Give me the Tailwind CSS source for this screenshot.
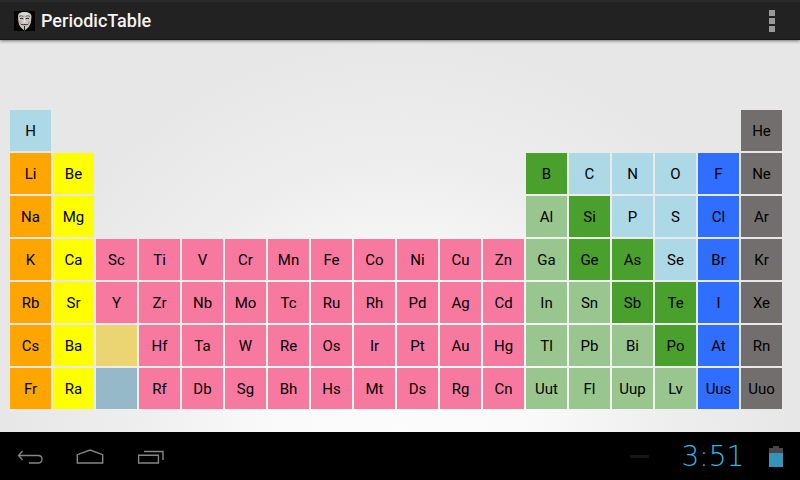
<!DOCTYPE html>
<html lang="en">
<head>
<meta charset="utf-8">
<meta name="viewport" content="width=device-width, initial-scale=1">
<title>PeriodicTable</title>
<script src="https://cdn.jsdelivr.net/npm/@tailwindcss/browser@4"></script>
</head>
<body class="flex min-h-screen flex-col bg-black font-[Roboto,sans-serif]">
<header class="z-10 flex h-10 items-center justify-between border-t-2 border-b border-t-[#2b2b2b] border-b-[#191919] bg-[#222222] pr-4 pl-[14px] shadow-[0_1px_3px_rgba(0,0,0,0.5)]">
  <div class="flex items-center gap-[6px]">
    <svg class="h-5 w-[21px]" viewBox="0 0 21 20" aria-hidden="true">
      <rect width="21" height="20" fill="#050505"/>
      <path d="M4 5Q4 1 10.500 1Q17 1 17.500 5L17 11Q16 16 10.500 19.500Q5 16 4.500 11Z" fill="#c6c6c2"/>
      <path d="M6 2.500Q10.500 0 15 2.500L14 4Q10.500 3 7 4Z" fill="#dededa"/>
      <path d="M5 5.500Q7 3.800 9.500 5.600M11.500 5.600Q14 3.800 16 5.500" fill="none" stroke="#555" stroke-width=".8"/>
      <path d="M6 7.700Q8 6.700 9.500 8M11.500 8Q13 6.700 15 7.700" fill="none" stroke="#222" stroke-width="1"/>
      <path d="M10 7L9.300 11.500H11.700L11 7" fill="#e4e4e0"/>
      <path d="M4.500 10H7.500V12H5ZM14 10H17L16.500 12H14Z" fill="#d0a0a6"/>
      <path d="M5.500 12Q8 14 10.500 12.900Q13 14 15.500 12Q14 14.600 10.500 14.100Q7 14.600 5.500 12Z" fill="#292929"/>
      <path d="M10 15H11V19H10Z" fill="#222"/>
    </svg>
    <h1 class="text-[18px] leading-6 font-medium text-[#f3f3f3]">PeriodicTable</h1>
  </div>
  <button type="button" aria-label="More options" class="flex h-8 w-6 flex-col items-center justify-center gap-[2px]">
    <span class="size-[6px] bg-[#999999]"></span>
    <span class="size-[6px] bg-[#999999]"></span>
    <span class="size-[6px] bg-[#999999]"></span>
  </button>
</header>

<main class="flex-1 bg-[radial-gradient(circle_at_50%_100%,#fcfcfc_0,#f9f9f9_140px,#ededed_280px,#e7e7e7_400px)] pt-[68px] pr-4 pb-5 pl-2">
  <table class="w-full table-fixed border-separate border-spacing-[2px] text-center text-[15px] leading-5 text-black" aria-label="Periodic table of the elements">
    <tbody id="elements"></tbody>
  </table>
</main>

<nav class="flex h-12 items-center justify-between bg-black pr-[17px]" aria-label="System">
  <div class="flex">
    <button type="button" aria-label="Back" class="flex h-12 w-[60px] items-center justify-center pt-1">
      <svg class="h-5 w-7" viewBox="0 0 28 20" fill="none" stroke="#858585" stroke-width="1.300" aria-hidden="true"><path d="M6.500 3L2.500 7.500L6.500 12M2.500 7.500H22Q26 7.500 26 11.200Q26 15 22 15H13"/></svg>
    </button>
    <button type="button" aria-label="Home" class="flex h-12 w-[60px] items-center justify-center pt-1">
      <svg class="h-5 w-7" viewBox="0 0 28 20" fill="none" stroke="#858585" stroke-width="1.400" aria-hidden="true"><path d="M1.300 15V6.700L14 2L26.700 6.700V15Z"/></svg>
    </button>
    <button type="button" aria-label="Recent apps" class="flex h-12 w-[60px] items-center justify-center pt-1">
      <svg class="h-5 w-7" viewBox="0 0 28 20" fill="none" stroke="#858585" stroke-width="1.400" aria-hidden="true"><path d="M2.600 7.300H22.400V15H2.600Z M8 3.500H27V12"/></svg>
    </button>
  </div>
  <div class="flex items-center">
    <span class="mr-6 h-[3px] w-[19px] bg-[#111717]"></span>
    <time class="w-20 pt-[2px] text-center font-['DejaVu_Sans',sans-serif] text-[28px] leading-8 font-extralight text-[#33b5e5]">3:51</time>
    <svg class="ml-4 h-[21px] w-[14px]" viewBox="0 0 14 21" role="img" aria-label="Battery"><path d="M4 0H10V2H14V21H0V2H4Z" fill="#484848"/><path d="M0 7H14V21H0Z" fill="#3494bb"/></svg>
  </div>
</nav>

<script>
const colors = {
  n: "bg-[#add8e6]", a: "bg-[#ffa500]", e: "bg-[#ffff00]", t: "bg-[#f879a0]",
  m: "bg-[#99c68e]", s: "bg-[#4aa02c]", h: "bg-[#306eff]", g: "bg-[#726e6d]",
  l: "bg-[#ebd572]", c: "bg-[#95b9c9]"
};
// Each entry is a group code and a symbol; "." is an empty position.
const rows = [
  "n:H . . . . . . . . . . . . . . . . g:He",
  "a:Li e:Be . . . . . . . . . . s:B n:C n:N n:O h:F g:Ne",
  "a:Na e:Mg . . . . . . . . . . m:Al s:Si n:P n:S h:Cl g:Ar",
  "a:K e:Ca t:Sc t:Ti t:V t:Cr t:Mn t:Fe t:Co t:Ni t:Cu t:Zn m:Ga s:Ge s:As n:Se h:Br g:Kr",
  "a:Rb e:Sr t:Y t:Zr t:Nb t:Mo t:Tc t:Ru t:Rh t:Pd t:Ag t:Cd m:In m:Sn s:Sb s:Te h:I g:Xe",
  "a:Cs e:Ba l: t:Hf t:Ta t:W t:Re t:Os t:Ir t:Pt t:Au t:Hg m:Tl m:Pb m:Bi s:Po h:At g:Rn",
  "a:Fr e:Ra c: t:Rf t:Db t:Sg t:Bh t:Hs t:Mt t:Ds t:Rg t:Cn m:Uut m:Fl m:Uup m:Lv h:Uus g:Uuo"
];
const body = document.getElementById("elements");
for (const row of rows) {
  const tr = body.insertRow();
  for (const item of row.split(" ")) {
    const td = tr.insertCell();
    td.className = "h-[41px] p-0";
    if (item === ".") continue;
    const [group, symbol] = item.split(":");
    td.classList.add(colors[group]);
    td.textContent = symbol;
  }
}
</script>
</body>
</html>
